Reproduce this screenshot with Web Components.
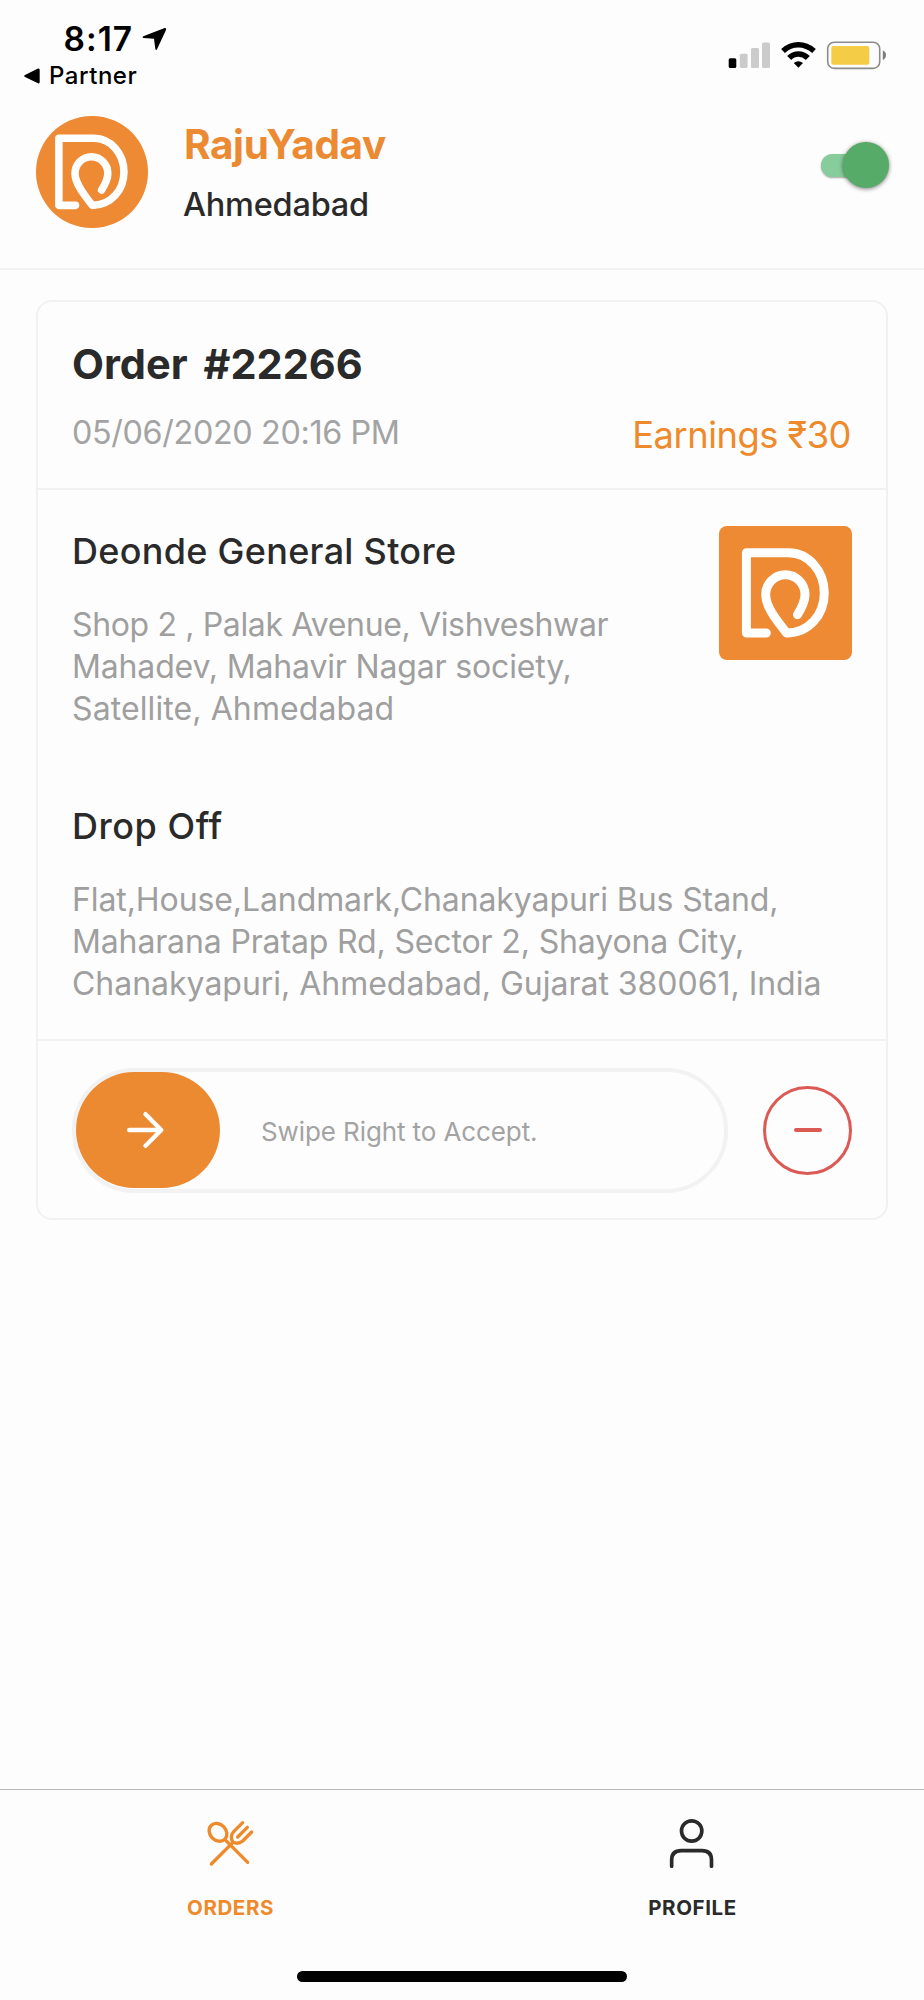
<!DOCTYPE html>
<html lang="en">
<head>
<meta charset="utf-8">
<title>Partner orders</title>
<style>
  body { margin: 0; background: #fdfdfd; font-family: Inter, "Liberation Sans", sans-serif; color: #2a2a2b; }
</style>
</head>
<body>
<partner-app></partner-app>
<script>
const define = (name, html) => {
  const template = document.createElement('template');
  template.innerHTML = html;
  customElements.define(name, class extends HTMLElement {
    constructor() {
      super();
      this.attachShadow({ mode: 'open' }).append(template.content.cloneNode(true));
    }
  });
};

define('brand-logo', `
  <style>
    :host { display: block; background: #ed8a33; overflow: hidden; }
    svg { display: block; width: 100%; height: 100%; }
  </style>
  <svg viewBox="0 0 133.5 133.5" fill="none" stroke="#fff" stroke-width="9" stroke-linecap="round" stroke-linejoin="round">
    <path d="M47.3 107H27.4V26.7H69.5C89.5 26.7 105.3 45 105.3 67S89.5 107 67.5 107C60 97 46.7 82 46.7 68.7a19.65 20 0 0 1 39.3 0C86 76 82 83 78.5 88.7"/>
  </svg>`);

define('status-bar', `
  <style>
    :host { display: flex; justify-content: space-between; height: 92px; color: #000; }
    .left { display: flex; flex-direction: column; }
    .time { display: flex; align-items: center; gap: 8.5px; height: 40px; padding: 19px 0 0 63.5px; font-size: 33.5px; font-weight: 600; letter-spacing: 1px; white-space: nowrap; }
    .back { display: flex; align-items: center; gap: 9px; height: 35px; padding-left: 24px; font-size: 24px; font-weight: 500; letter-spacing: .53px; }
    .right { display: flex; padding: 41px 37px 0 0; }
    svg { display: block; flex: none; }
  </style>
  <div class="left">
    <div class="time"><span>8:17</span>
      <svg width="25" height="24" viewBox="427 81 75 72"><path d="M495 84Q501 83 499 90L472 148Q469 153 467 147L463 116L432 114Q426 112 431 109Z"/></svg>
    </div>
    <div class="back">
      <svg width="16" height="16" viewBox="0 0 16 16"><path d="M1 7 14 .5Q15.7 0 15.7 2V14Q15.7 16 14 15.3L1 9Q-.6 8 1 7Z"/></svg>
      <span>Partner</span>
    </div>
  </div>
  <div class="right">
    <svg width="159" height="29" viewBox="728 41 159 29">
      <rect x="728.7" y="58.3" width="7.6" height="9.7" rx="1.5"/>
      <g fill="#cbcbcb"><rect x="739.8" y="53.8" width="7.8" height="14.2" rx="1.5"/><rect x="751" y="48" width="8" height="20" rx="1.5"/><rect x="762" y="42.5" width="8" height="25.5" rx="1.5"/></g>
      <g fill="none" stroke="#000"><path stroke-width="5.6" d="M783 51Q790 44.8 798.4 44.8T814 51M789.2 58Q793 54 798.4 54T807.8 58"/></g>
      <path d="M793.8 63Q798.4 59.3 803 63L798.4 67.7Z"/>
      <rect x="827.7" y="42.2" width="52" height="26.2" rx="6.5" fill="none" stroke="#8c8c8c" stroke-width="1.6"/>
      <rect x="831.3" y="46" width="38" height="18.8" rx="2" fill="#f5cc46"/>
      <path d="M882.8 50.6Q886 52 886 55.2T882.8 60Z" fill="#7d7d7d"/>
    </svg>
  </div>`);

define('toggle-switch', `
  <style>
    :host { display: flex; align-items: center; width: 68px; height: 46px; }
    .track { width: 45px; height: 23px; flex: none; border-radius: 12px; background: #86cd9b; box-shadow: 0 1px 2px rgba(0,0,0,.35); }
    .knob { width: 45.5px; height: 45.5px; flex: none; margin-left: -22.5px; border-radius: 50%; background: #56ab68; box-shadow: 0 1px 4px rgba(0,0,0,.5); }
  </style>
  <div class="track"></div><div class="knob"></div>`);

define('profile-header', `
  <style>
    :host { display: flex; height: 176px; border-bottom: 2px solid #f1f1f1; }
    brand-logo { width: 111.5px; height: 111.5px; margin: 24.3px 36.5px 0 36px; border-radius: 50%; }
    .who { flex: 1; padding-top: 28.5px; }
    .name { height: 48px; line-height: 48px; font-size: 40.5px; font-weight: 700; color: #ec8a33; letter-spacing: -.4px; }
    .city { margin: 16.5px 0 0 -1px; height: 40px; line-height: 40px; font-size: 32.5px; font-weight: 500; letter-spacing: -.24px; }
    toggle-switch { margin: 50px 35.500px 0 0; }
  </style>
  <brand-logo></brand-logo>
  <div class="who"><div class="name"><slot name="name"></slot></div><div class="city"><slot name="city"></slot></div></div>
  <toggle-switch></toggle-switch>`);

define('swipe-button', `
  <style>
    :host { display: flex; align-items: center; box-sizing: border-box; width: 655.5px; height: 125px; border: 4px solid #f2f2f2; border-radius: 62px; }
    .thumb { display: flex; align-items: center; justify-content: center; width: 144px; height: 116.5px; border-radius: 58px; background: #ec8a32; margin-right: 41px; }
    span { font-size: 26px; color: #a3a3a3; letter-spacing: -.1px; padding-top: 2px; }
    svg { display: block; margin-right: 7px; }
  </style>
  <div class="thumb"><svg width="38" height="38" viewBox="0 0 38 38" fill="none" stroke="#fff" stroke-width="4.4" stroke-linecap="round" stroke-linejoin="round"><path d="M3.2 19H35M19.6 3.2 35.2 19 19.6 34.8"/></svg></div>
  <span><slot></slot></span>`);

define('decline-button', `
  <style>
    :host { display: flex; align-items: center; justify-content: center; box-sizing: border-box; width: 89px; height: 89px; border: 3px solid #dc5a55; border-radius: 50%; }
    i { width: 28px; height: 4px; border-radius: 2px; background: #dc5a55; }
  </style><i></i>`);

define('address-block', `
  <style>
    :host { display: block; }
    .title { height: 44px; line-height: 44px; font-size: 36px; font-weight: 500; letter-spacing: var(--title-spacing, .29px); }
    .lines { margin-top: 31px; font-size: 32px; line-height: 42px; color: #9f9f9f; white-space: nowrap; }
  </style>
  <div class="title"><slot name="title"></slot></div>
  <div class="lines"><slot></slot></div>`);

define('order-card', `
  <style>
    :host { display: block; box-sizing: border-box; width: 852px; height: 920px; margin: 29.5px 0 0 36px; border: 2px solid #f1f1f1; border-radius: 16px; }
    .head { box-sizing: border-box; height: 188.5px; padding: 37.8px 34px 0; border-bottom: 2px solid #f1f1f1; }
    .number { height: 50px; line-height: 50px; font-size: 41.5px; font-weight: 700; letter-spacing: 0; word-spacing: 6px; }
    .meta { display: flex; justify-content: space-between; margin-top: 23.7px; }
    .date { height: 40px; line-height: 40px; font-size: 32.3px; color: #a3a3a3; letter-spacing: -.35px; }
    .earn { height: 40px; line-height: 40px; margin: 1.8px 1px 0 0; font-size: 36.3px; color: #ee8a2b; letter-spacing: -.5px; }
    .body { box-sizing: border-box; height: 551px; padding: 39px 34px 0; border-bottom: 2px solid #f1f1f1; }
    .shop { display: flex; justify-content: space-between; height: 274.7px; }
    brand-logo { width: 133.5px; height: 133.5px; border-radius: 8px; margin-top: -2.8px; }
    .foot { display: flex; align-items: center; justify-content: space-between; padding: 26.5px 34px 0; }
    .s1 { --title-spacing: .29px; } .s2 { --title-spacing: .55px; }
    .l { display: block; }
  </style>
  <div class="head">
    <div class="number">Order #22266</div>
    <div class="meta"><div class="date">05/06/2020 20:16 PM</div><div class="earn">Earnings ₹30</div></div>
  </div>
  <div class="body">
    <div class="shop">
      <address-block class="s1"><span slot="title">Deonde General Store</span>
        <span class="l" style="letter-spacing:-.36px">Shop 2 , Palak Avenue, Vishveshwar</span>
        <span class="l" style="letter-spacing:-.16px">Mahadev, Mahavir Nagar society,</span>
        <span class="l" style="letter-spacing:.1px">Satellite, Ahmedabad</span>
      </address-block>
      <brand-logo></brand-logo>
    </div>
    <address-block class="s2"><span slot="title">Drop Off</span>
      <span class="l" style="letter-spacing:-.09px">Flat,House,Landmark,Chanakyapuri Bus Stand,</span>
      <span class="l" style="letter-spacing:-.14px">Maharana Pratap Rd, Sector 2, Shayona City,</span>
      <span class="l" style="letter-spacing:-.02px">Chanakyapuri, Ahmedabad, Gujarat 380061, India</span>
    </address-block>
  </div>
  <div class="foot"><swipe-button>Swipe Right to Accept.</swipe-button><decline-button></decline-button></div>`);

define('tab-item', `
  <style>
    :host { display: flex; flex: 1; flex-direction: column; align-items: center; padding-top: 28px; font-size: 20.5px; font-weight: 700; letter-spacing: .6px; }
    .label { margin: 25px 1px 0 0; height: 30px; line-height: 30px; }
  </style>
  <slot name="icon"></slot>
  <div class="label"><slot></slot></div>`);

define('tab-bar', `
  <style>
    :host { display: flex; flex: none; box-sizing: border-box; height: 182px; border-top: 1.5px solid #b9b9b9; }
    svg { display: block; }
    .active { color: #ee8a2b; }
  </style>
  <tab-item class="active">
    <svg slot="icon" width="50" height="50" viewBox="168 144 150 150" fill="none" stroke="currentColor" stroke-width="10" stroke-linecap="round" stroke-linejoin="round">
      <ellipse cx="204" cy="187" rx="29" ry="24" transform="rotate(45 204 187)"/>
      <path d="M225 209 293 277M184 282 249 217M278 158 251 185Q238 199 249 217Q265 224 278 213L305 186M292 172 263 201"/>
    </svg>ORDERS</tab-item>
  <tab-item>
    <svg slot="icon" width="50" height="50" viewBox="174 144 150 150" fill="none" stroke="currentColor" stroke-width="11" stroke-linecap="round">
      <circle cx="245" cy="183" r="30.5"/><path d="M185 289V270Q185 242 214 242H276Q304.500 242 304.500 270V289"/>
    </svg>PROFILE</tab-item>`);

define('home-indicator', `
  <style>:host { display: block; flex: none; width: 330px; height: 11px; margin: 0 auto 18px; border-radius: 6px; background: #000; }</style>`);

define('partner-app', `
  <style>
    :host { display: flex; flex-direction: column; width: 924px; height: 2000px; overflow: hidden; }
    main { flex: 1; }
  </style>
  <status-bar></status-bar>
  <profile-header><span slot="name">RajuYadav</span><span slot="city">Ahmedabad</span></profile-header>
  <main><order-card></order-card></main>
  <tab-bar></tab-bar>
  <home-indicator></home-indicator>`);
</script>
</body>
</html>
